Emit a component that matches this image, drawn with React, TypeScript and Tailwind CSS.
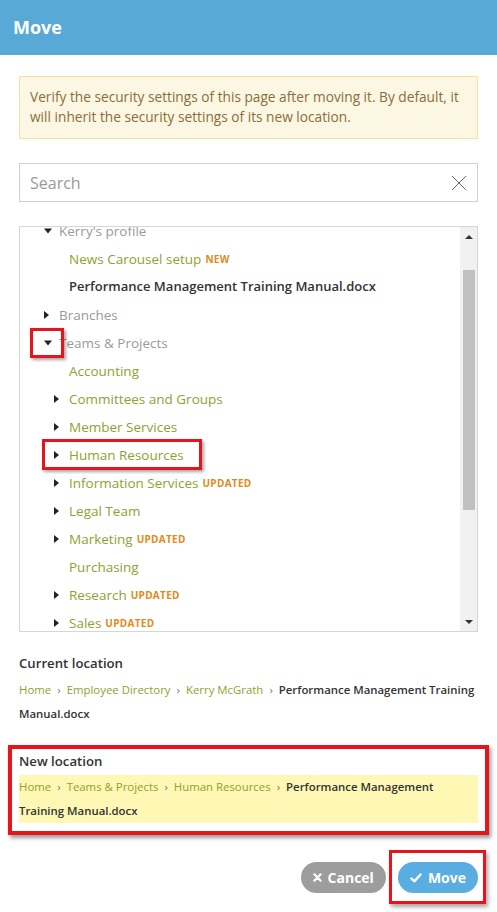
import React from "react"

const font = { fontFamily: "'Open Sans', 'Liberation Sans', sans-serif" }

type Row = {
  label: string
  level: number
  arrow?: "right" | "down"
  tone: "gray" | "green" | "bold"
  badge?: string
  mark?: boolean
  markArrow?: boolean
}

const rows: Row[] = [
  { label: "Kerry's profile", level: 1, arrow: "down", tone: "gray" },
  { label: "News Carousel setup", level: 2, tone: "green", badge: "NEW" },
  { label: "Performance Management Training Manual.docx", level: 2, tone: "bold" },
  { label: "Branches", level: 1, arrow: "right", tone: "gray" },
  { label: "Teams & Projects", level: 1, arrow: "down", tone: "gray", markArrow: true },
  { label: "Accounting", level: 2, tone: "green" },
  { label: "Committees and Groups", level: 2, arrow: "right", tone: "green" },
  { label: "Member Services", level: 2, arrow: "right", tone: "green" },
  { label: "Human Resources", level: 2, arrow: "right", tone: "green", mark: true },
  { label: "Information Services", level: 2, arrow: "right", tone: "green", badge: "UPDATED" },
  { label: "Legal Team", level: 2, arrow: "right", tone: "green" },
  { label: "Marketing", level: 2, arrow: "right", tone: "green", badge: "UPDATED" },
  { label: "Purchasing", level: 2, tone: "green" },
  { label: "Research", level: 2, arrow: "right", tone: "green", badge: "UPDATED" },
  { label: "Sales", level: 2, arrow: "right", tone: "green", badge: "UPDATED" },
]

function Arrow({ dir }: { dir: "right" | "down" }) {
  if (dir === "down")
    return <span className="block w-0 h-0 border-l-[4px] border-r-[4px] border-t-[5px] border-l-transparent border-r-transparent border-t-[#222]" />
  return <span className="block w-0 h-0 border-t-[4px] border-b-[4px] border-l-[5px] border-t-transparent border-b-transparent border-l-[#222]" />
}

function TreeRow({ row }: { row: Row }) {
  const textLeft = row.level === 1 ? "pl-[39px]" : "pl-[49px]"
  const color =
    row.tone === "gray"
      ? "text-[#9a9a9a] text-[13.5px]"
      : row.tone === "green"
        ? "text-[#8ea232] text-[13.5px]"
        : "text-[#333] font-semibold text-[13px]"
  return (
    <div className={`relative h-[28px] flex items-center ${textLeft}`}>
      {row.arrow && (
        <span className={`absolute top-1/2 -translate-y-1/2 ${row.level === 1 ? "left-[24px]" : "left-[34px]"}`}>
          <Arrow dir={row.arrow} />
        </span>
      )}
      {row.markArrow && (
        <span className="absolute left-[10px] top-[-1px] w-[34px] h-[30px] border-[3px] border-[#e8141b] shadow-[2px_2px_3px_rgba(0,0,0,0.35)]" />
      )}
      {row.mark && (
        <span className="absolute left-[22px] top-[-2px] w-[160px] h-[31px] border-[3px] border-[#e8141b] shadow-[2px_2px_3px_rgba(0,0,0,0.35)]" />
      )}
      <span className={`whitespace-nowrap ${color}`}>{row.label}</span>
      {row.badge && <span className="ml-[4px] text-[10px] font-bold text-[#e08a1c] tracking-[0.3px]">{row.badge}</span>}
    </div>
  )
}

function Crumbs({ items, last }: { items: string[]; last: string }) {
  return (
    <p className="text-[11.4px] leading-[24px] text-[#333]">
      {items.map((it) => (
        <React.Fragment key={it}>
          <span className="text-[#8ea232]">{it}</span>
          <span className="text-[#777] mx-[6px]">›</span>
        </React.Fragment>
      ))}
      <span className="font-semibold">{last}</span>
    </p>
  )
}

export default function App() {
  return (
    <div className="w-[497px] h-[912px] bg-white overflow-hidden flex flex-col" style={font}>
      {/* Header */}
      <div className="h-[55px] bg-[#58a9d6] flex items-center px-[13px]">
        <h1 className="text-white text-[18px] font-bold">Move</h1>
      </div>

      <div className="px-[19px] pt-[21px] flex flex-col">
        {/* Warning */}
        <div className="bg-[#fcf7e2] border border-[#f3e2a2] px-[10px] pt-[10px] pb-[11px] text-[13.7px] leading-[20px] text-[#8a6d3b]">
          Verify the security settings of this page after moving it. By default, it will inherit the security settings of its new location.
        </div>

        {/* Search */}
        <div className="mt-[24px] h-[39px] border border-[#cfcfcf] flex items-center justify-between pl-[10px] pr-[10px]">
          <span className="text-[16px] text-[#9a9a9a]">Search</span>
          <svg width="16" height="16" viewBox="0 0 16 16" className="text-[#666]">
            <path d="M1 1 L15 15 M15 1 L1 15" stroke="currentColor" strokeWidth="1" fill="none" />
          </svg>
        </div>

        {/* Tree */}
        <div className="mt-[24px] h-[406px] border border-[#d6d6d6] flex overflow-hidden">
          <div className="flex-1 overflow-hidden">
            <div className="-mt-[10px]">
              {rows.map((r) => (
                <TreeRow key={r.label} row={r} />
              ))}
            </div>
          </div>
          <div className="w-[17px] bg-[#f1f1f1] flex flex-col items-center">
            <div className="h-[17px] flex items-center justify-center pt-[2px]">
              <span className="block w-0 h-0 border-l-[4px] border-r-[4px] border-b-[4px] border-l-transparent border-r-transparent border-b-[#333]" />
            </div>
            <div className="mt-[26px] w-[12px] h-[240px] bg-[#c1c1c1]" />
            <div className="flex-1" />
            <div className="h-[17px] flex items-center justify-center pb-[2px]">
              <span className="block w-0 h-0 border-l-[4px] border-r-[4px] border-t-[4px] border-l-transparent border-r-transparent border-t-[#333]" />
            </div>
          </div>
        </div>

        {/* Current location */}
        <div className="mt-[21px]">
          <h2 className="text-[13.2px] font-semibold text-[#333] leading-[20px]">Current location</h2>
          <div className="mt-[5px]">
            <Crumbs items={["Home", "Employee Directory", "Kerry McGrath"]} last="Performance Management Training Manual.docx" />
          </div>
        </div>

        {/* New location */}
        <div className="relative mt-[25px]">
          <span className="absolute -left-[11px] -right-[11px] -top-[6px] -bottom-[12px] border-[4px] border-[#e8141b] shadow-[2px_3px_4px_rgba(0,0,0,0.4)]" />
          <h2 className="text-[13.2px] font-semibold text-[#333] leading-[20px]">New location</h2>
          <div className="mt-[4px] bg-[#fff8b5]">
            <Crumbs items={["Home", "Teams & Projects", "Human Resources"]} last="Performance Management Training Manual.docx" />
          </div>
        </div>

        {/* Buttons */}
        <div className="mt-[39px] flex justify-end gap-[12px]">
          <button className="h-[31px] px-[12px] rounded-full bg-[#9d9d9d] text-white text-[14px] font-bold flex items-center gap-[6px]">
            <svg width="9" height="9" viewBox="0 0 10 10">
              <path d="M1.5 1.5 L8.5 8.5 M8.5 1.5 L1.5 8.5" stroke="white" strokeWidth="2.4" strokeLinecap="round" />
            </svg>
            Cancel
          </button>
          <div className="relative">
            <span className="absolute -left-[9px] -right-[8px] -top-[12px] -bottom-[11px] border-[3px] border-[#e8141b] shadow-[2px_3px_4px_rgba(0,0,0,0.35)]" />
            <button className="h-[31px] px-[12px] rounded-full bg-[#5aade0] text-white text-[14px] font-bold flex items-center gap-[6px]">
              <svg width="12" height="10" viewBox="0 0 12 10">
                <path d="M1.5 5.5 L4.5 8.3 L10.5 1.5" stroke="white" strokeWidth="2.4" fill="none" strokeLinecap="round" strokeLinejoin="round" />
              </svg>
              Move
            </button>
          </div>
        </div>
      </div>
    </div>
  )
}
